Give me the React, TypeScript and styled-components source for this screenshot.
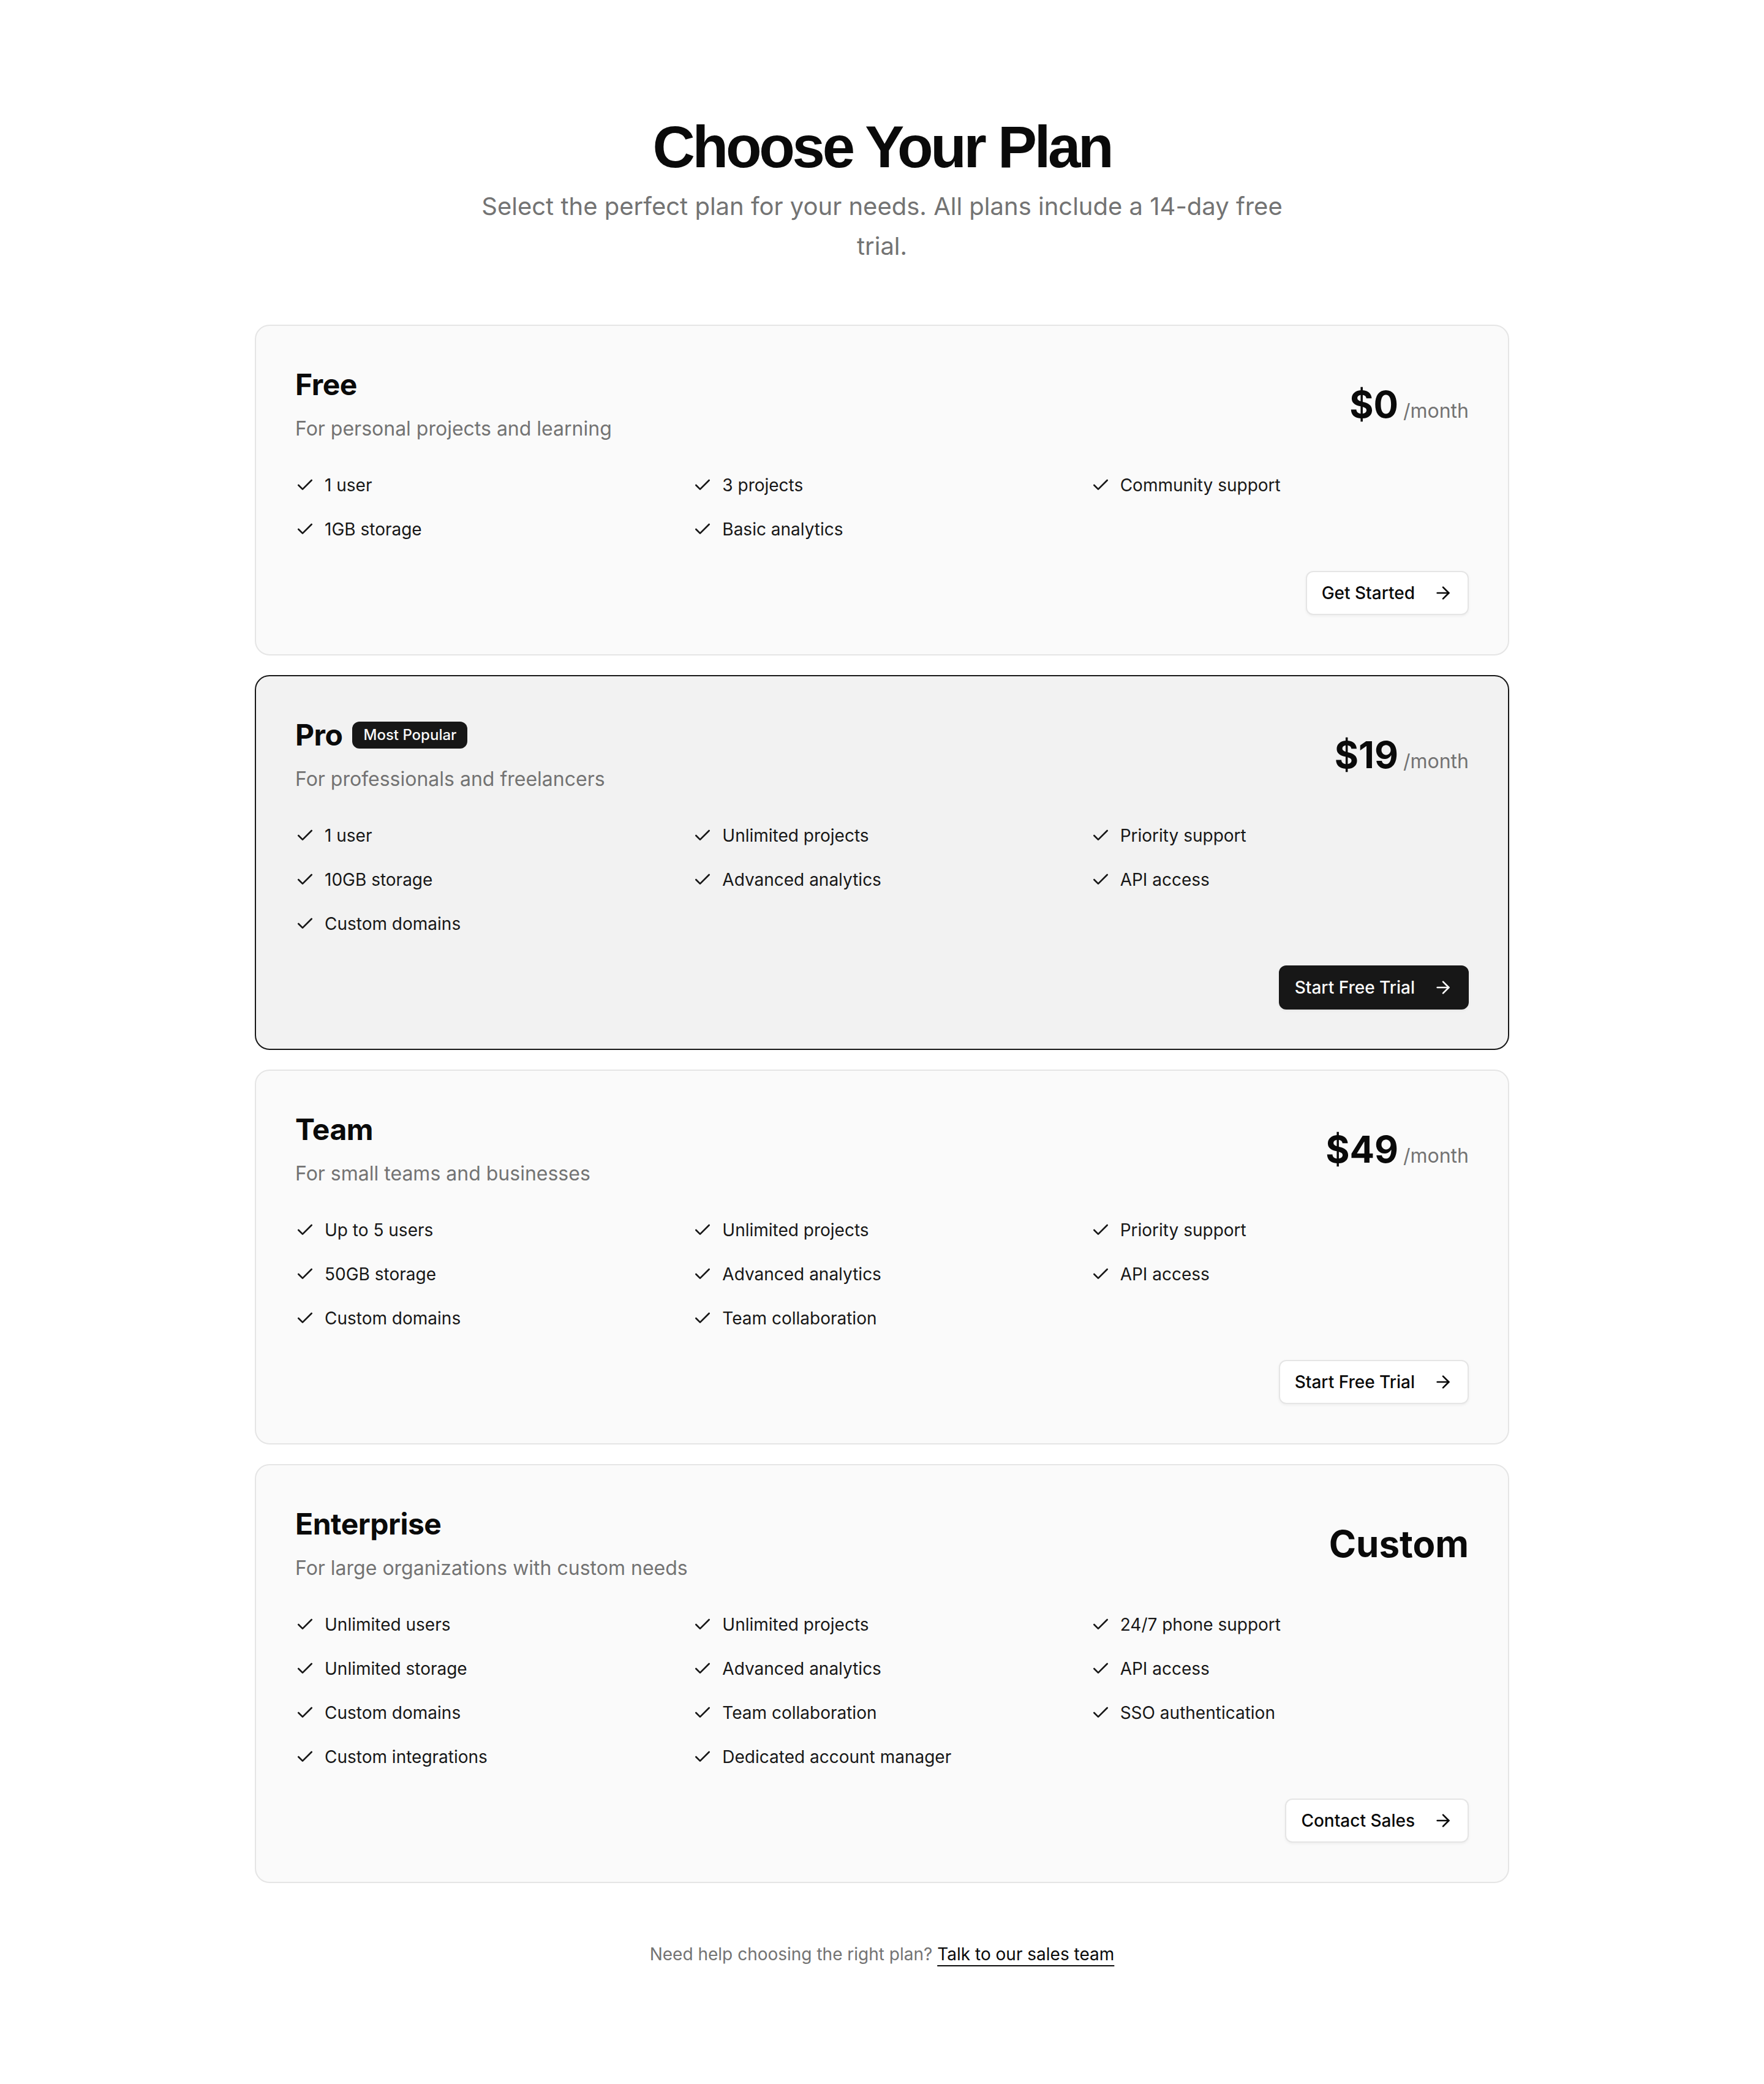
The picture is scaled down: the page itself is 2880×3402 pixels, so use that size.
import React from 'react';
import styled, { createGlobalStyle } from 'styled-components';
import { Check, ArrowRight } from 'lucide-react';

// Page is drawn at a 2x scale: every length below is twice the design value.

const GlobalStyle = createGlobalStyle`
  * {
    box-sizing: border-box;
  }
  body {
    margin: 0;
    background: #ffffff;
    color: #0a0a0a;
    font-family: Inter, "Noto Sans", sans-serif;
    -webkit-font-smoothing: antialiased;
  }
`;

const Page = styled.main`
  padding: 192px 32px 192px;
`;

const Wrapper = styled.div`
  max-width: 2048px;
  margin: 0 auto;
`;

const Intro = styled.header`
  text-align: center;
  margin-bottom: 96px;
`;

const Title = styled.h1`
  margin: 0 0 16px;
  font-family: "Liberation Sans", Arial, sans-serif;
  font-size: 96px;
  line-height: 1;
  font-weight: 700;
  letter-spacing: -0.045em;
  color: #0a0a0a;
`;

const Subtitle = styled.p`
  margin: 0 auto;
  max-width: 1344px;
  font-size: 40px;
  line-height: 1.625;
  color: #737373;
`;

const PlanList = styled.div`
  display: flex;
  flex-direction: column;
  gap: 32px;
`;

const Card = styled.section<{ $featured?: boolean }>`
  padding: 64px;
  border-radius: 24px;
  border: 2px solid ${(p) => (p.$featured ? '#171717' : '#e5e5e5')};
  background: ${(p) => (p.$featured ? '#f2f2f2' : '#fafafa')};
`;

const CardHead = styled.div`
  display: flex;
  justify-content: space-between;
  align-items: center;
  margin-bottom: 48px;
`;

const NameRow = styled.div`
  display: flex;
  align-items: center;
  gap: 16px;
`;

const PlanName = styled.h2`
  margin: 0;
  font-size: 48px;
  line-height: 64px;
  font-weight: 700;
  letter-spacing: -0.01em;
`;

const Badge = styled.span`
  display: inline-flex;
  align-items: center;
  padding: 4px 16px;
  border: 2px solid transparent;
  border-radius: 12px;
  background: #171717;
  color: #fafafa;
  font-size: 24px;
  line-height: 32px;
  font-weight: 500;
`;

const PlanDesc = styled.p`
  margin: 16px 0 0;
  font-size: 32px;
  line-height: 48px;
  color: #737373;
`;

const Price = styled.div`
  display: flex;
  align-items: baseline;
  gap: 8px;
`;

const Amount = styled.span`
  font-size: 60px;
  line-height: 72px;
  font-weight: 700;
  color: #0a0a0a;
`;

const Period = styled.span`
  font-size: 32px;
  line-height: 48px;
  color: #737373;
`;

const Features = styled.ul`
  list-style: none;
  margin: 0 0 48px;
  padding: 0;
  display: grid;
  grid-template-columns: repeat(3, 1fr);
  gap: 32px;
`;

const Feature = styled.li`
  display: flex;
  align-items: center;
  gap: 16px;
  font-size: 28px;
  line-height: 40px;
  color: #171717;

  svg {
    flex-shrink: 0;
  }
`;

const Actions = styled.div`
  display: flex;
  justify-content: flex-end;
`;

const Button = styled.button<{ $primary?: boolean }>`
  display: inline-flex;
  align-items: center;
  gap: 30px;
  height: 72px;
  padding: 0 24px;
  border-radius: 12px;
  border: 2px solid ${(p) => (p.$primary ? '#171717' : '#e5e5e5')};
  background: ${(p) => (p.$primary ? '#171717' : '#ffffff')};
  color: ${(p) => (p.$primary ? '#fafafa' : '#0a0a0a')};
  box-shadow: 0 2px 4px rgba(0, 0, 0, 0.05);
  font-family: Inter, "Noto Sans", sans-serif;
  font-size: 28px;
  line-height: 40px;
  font-weight: 500;
  cursor: pointer;
`;

const Footer = styled.p`
  margin: 96px 0 0;
  text-align: center;
  font-size: 28px;
  line-height: 40px;
  color: #737373;
`;

const Link = styled.a`
  color: #0a0a0a;
  text-decoration: underline;
  text-decoration-thickness: 2px;
  text-underline-offset: 8px;
`;

type Plan = {
  name: string;
  desc: string;
  price: string;
  period?: string;
  features: string[];
  cta: string;
  featured?: boolean;
  badge?: string;
};

const plans: Plan[] = [
  {
    name: 'Free',
    desc: 'For personal projects and learning',
    price: '$0',
    period: '/month',
    features: ['1 user', '3 projects', 'Community support', '1GB storage', 'Basic analytics'],
    cta: 'Get Started',
  },
  {
    name: 'Pro',
    desc: 'For professionals and freelancers',
    price: '$19',
    period: '/month',
    features: [
      '1 user',
      'Unlimited projects',
      'Priority support',
      '10GB storage',
      'Advanced analytics',
      'API access',
      'Custom domains',
    ],
    cta: 'Start Free Trial',
    featured: true,
    badge: 'Most Popular',
  },
  {
    name: 'Team',
    desc: 'For small teams and businesses',
    price: '$49',
    period: '/month',
    features: [
      'Up to 5 users',
      'Unlimited projects',
      'Priority support',
      '50GB storage',
      'Advanced analytics',
      'API access',
      'Custom domains',
      'Team collaboration',
    ],
    cta: 'Start Free Trial',
  },
  {
    name: 'Enterprise',
    desc: 'For large organizations with custom needs',
    price: 'Custom',
    features: [
      'Unlimited users',
      'Unlimited projects',
      '24/7 phone support',
      'Unlimited storage',
      'Advanced analytics',
      'API access',
      'Custom domains',
      'Team collaboration',
      'SSO authentication',
      'Custom integrations',
      'Dedicated account manager',
    ],
    cta: 'Contact Sales',
  },
];

function PlanCard({ plan }: { plan: Plan }) {
  return (
    <Card $featured={plan.featured}>
      <CardHead>
        <div>
          <NameRow>
            <PlanName>{plan.name}</PlanName>
            {plan.badge && <Badge>{plan.badge}</Badge>}
          </NameRow>
          <PlanDesc>{plan.desc}</PlanDesc>
        </div>
        <Price>
          <Amount>{plan.price}</Amount>
          {plan.period && <Period>{plan.period}</Period>}
        </Price>
      </CardHead>
      <Features>
        {plan.features.map((f) => (
          <Feature key={f}>
            <Check size={32} strokeWidth={2} />
            {f}
          </Feature>
        ))}
      </Features>
      <Actions>
        <Button $primary={plan.featured}>
          {plan.cta}
          <ArrowRight size={32} strokeWidth={2} />
        </Button>
      </Actions>
    </Card>
  );
}

export default function App() {
  return (
    <>
      <GlobalStyle />
      <Page>
        <Wrapper>
          <Intro>
            <Title>Choose Your Plan</Title>
            <Subtitle>
              Select the perfect plan for your needs. All plans include a 14-day free trial.
            </Subtitle>
          </Intro>
          <PlanList>
            {plans.map((plan) => (
              <PlanCard key={plan.name} plan={plan} />
            ))}
          </PlanList>
          <Footer>
            Need help choosing the right plan? <Link href="#">Talk to our sales team</Link>
          </Footer>
        </Wrapper>
      </Page>
    </>
  );
}
